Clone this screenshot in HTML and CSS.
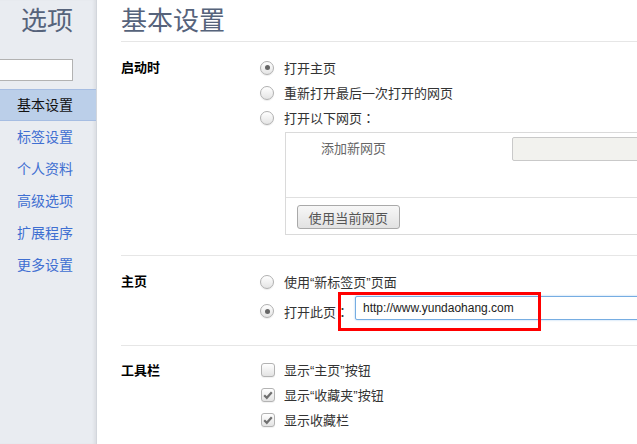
FILE: index.html
```html
<!DOCTYPE html>
<html lang="zh-CN">
<head>
<meta charset="utf-8">
<title>选项 - 基本设置</title>
<link rel="stylesheet" href="styles.css">
</head>
<body>
<div class="page">
  <aside class="sidebar">
    <h1 class="side-title">选项</h1>
    <div class="search-wrap"><input class="search" type="text"></div>
    <nav class="nav">
      <a class="nav-item active">基本设置</a>
      <a class="nav-item">标签设置</a>
      <a class="nav-item">个人资料</a>
      <a class="nav-item">高级选项</a>
      <a class="nav-item">扩展程序</a>
      <a class="nav-item">更多设置</a>
    </nav>
  </aside>
  <main class="main">
    <header class="header"><h2 class="main-title">基本设置</h2></header>

    <section class="section s1">
      <div class="label">启动时</div>
      <div class="controls">
        <div class="row"><span class="radio checked"></span><span>打开主页</span></div>
        <div class="row"><span class="radio"></span><span>重新打开最后一次打开的网页</span></div>
        <div class="row"><span class="radio"></span><span>打开以下网页<span class="colon" lang="zh-TW">：</span></span></div>
        <div class="pages-box">
          <div class="pages-list">
            <span class="add-text">添加新网页</span>
            <span class="add-input"></span>
          </div>
          <div class="pages-foot">
            <button class="btn">使用当前网页</button>
          </div>
        </div>
      </div>
    </section>

    <section class="section s2">
      <div class="label">主页</div>
      <div class="controls">
        <div class="row"><span class="radio"></span><span>使用“新标签页”页面</span></div>
        <div class="row row-url">
          <span class="radio checked"></span><span>打开此页<span class="colon" lang="zh-TW">：</span></span>
          <span class="url-input">http://www.yundaohang.com</span>
          <span class="highlight"></span>
        </div>
      </div>
    </section>

    <section class="section s3">
      <div class="label">工具栏</div>
      <div class="controls">
        <div class="row crow"><span class="checkbox"></span><span>显示“主页”按钮</span></div>
        <div class="row crow"><span class="checkbox"><svg viewBox="0 0 14 14" width="14" height="14"><path d="M3.2 7.2 L5.8 9.8 L10.8 4.2" fill="none" stroke="#707070" stroke-width="2.2"/></svg></span><span>显示“收藏夹”按钮</span></div>
        <div class="row crow"><span class="checkbox"><svg viewBox="0 0 14 14" width="14" height="14"><path d="M3.2 7.2 L5.8 9.8 L10.8 4.2" fill="none" stroke="#707070" stroke-width="2.2"/></svg></span><span>显示收藏栏</span></div>
      </div>
    </section>
  </main>
</div>
</body>
</html>
```

FILE: styles.css
```css
html, body {
  margin: 0;
  padding: 0;
  overflow: hidden;
  background: #fff;
}
body {
  font-family: "Liberation Sans", "Noto Sans CJK SC", sans-serif;
  font-size: 13px;
  color: #333;
}
.page {
  display: flex;
  height: 444px;
  width: 637px;
  overflow: hidden;
}

/* Sidebar */
.sidebar {
  width: 96px;
  flex: none;
  background: #e9ecf1;
  border-right: 1px solid #d2d6dc;
  box-shadow: inset -3px 0 3px -1px rgba(0, 0, 0, 0.06);
  overflow: hidden;
  text-align: right;
}
.side-title {
  margin: 6px 23px 0 0;
  font-size: 26px;
  font-weight: normal;
  line-height: 30px;
  color: #56637b;
}
.search-wrap {
  margin-top: 23px;
  padding-right: 23px;
  display: flex;
  justify-content: flex-end;
}
.search {
  width: 90px;
  height: 22px;
  box-sizing: border-box;
  border: 1px solid #b2b2b2;
  background: #fff;
  padding: 0;
  margin: 0 0 0 -20px;
  flex: none;
}
.nav {
  margin-top: 8px;
  display: flex;
  flex-direction: column;
}
.nav-item {
  display: block;
  height: 32px;
  line-height: 32px;
  padding-right: 23px;
  font-size: 14px;
  color: #3f6fd1;
  box-sizing: border-box;
}
.nav-item.active {
  background: #bbcfe9;
  border-top: 1px solid #a6bde2;
  border-bottom: 1px solid #a6bde2;
  line-height: 30px;
  color: #111;
}

/* Main */
.main {
  flex: 1;
  padding-left: 24px;
  min-width: 0;
}
.header {
  box-sizing: border-box;
  height: 42px;
  padding-top: 6px;
  border-bottom: 1px solid #e6e6e6;
}
.main-title {
  margin: 0;
  font-size: 26px;
  font-weight: normal;
  line-height: 30px;
  color: #56637b;
}
.section {
  display: flex;
  border-bottom: 1px solid #e6e6e6;
}
.s1 { padding: 13px 0 20px; }
.s2 { padding: 13px 0 17px; }
.s3 { padding: 11px 0 0; border-bottom: none; }

.label {
  width: 139px;
  flex: none;
  font-weight: bold;
  color: #000;
  line-height: 26px;
}
.s3 .label { line-height: 27px; }
.controls {
  width: 440px;
  flex: none;
}
.row {
  display: flex;
  align-items: center;
  height: 25px;
  gap: 10px;
  white-space: nowrap;
}
.crow {
  height: 25px;
  gap: 9px;
}
.colon {
  font-family: "Noto Sans CJK TC", "Noto Sans CJK SC", sans-serif;
}
.radio {
  width: 14px;
  height: 14px;
  box-sizing: border-box;
  border-radius: 50%;
  border: 1px solid #b0b0b0;
  background: linear-gradient(#ffffff, #e4e4e4);
  box-shadow: 0 1px 1px rgba(0, 0, 0, 0.08);
  flex: none;
  display: flex;
  align-items: center;
  justify-content: center;
}
.radio.checked::after {
  content: "";
  width: 5px;
  height: 5px;
  border-radius: 50%;
  background: #666;
}
.checkbox {
  width: 14px;
  height: 14px;
  box-sizing: border-box;
  margin-left: 1px;
  border-radius: 3px;
  border: 1px solid #b3b3b3;
  background: linear-gradient(#ffffff, #e3e3e3);
  box-shadow: 0 1px 1px rgba(0, 0, 0, 0.06);
  flex: none;
  display: flex;
  align-items: center;
  justify-content: center;
}
.checkbox svg {
  display: block;
  margin: -1px;
}

/* pages box */
.pages-box {
  margin: 2px 0 0 25px;
  border: 1px solid #dadada;
  width: 420px;
}
.pages-list {
  height: 65px;
  box-sizing: border-box;
  padding: 4px 0 0 35px;
  border-bottom: 1px solid #e0e0e0;
  display: flex;
  align-items: flex-start;
}
.add-text {
  width: 191px;
  flex: none;
  line-height: 24px;
  color: #666;
}
.add-input {
  width: 200px;
  height: 24px;
  box-sizing: border-box;
  border: 1px solid #c9c9c9;
  border-radius: 2px;
  background: #f2f2ee;
}
.pages-foot {
  height: 36px;
  box-sizing: border-box;
  padding: 7px 0 0 11px;
}
.btn {
  width: 103px;
  height: 24px;
  border: 1px solid #a9a9a9;
  border-radius: 3px;
  background: linear-gradient(#f7f7f7, #e2e2e2);
  font-family: "Liberation Sans", "Noto Sans CJK SC", sans-serif;
  font-size: 13px;
  color: #555;
  padding: 0;
  letter-spacing: 0.3px;
}

/* homepage url */
.row-url {
  height: 34px;
  position: relative;
}
.url-input {
  align-self: flex-start;
  margin: 2px 0 0 -4px;
  width: 320px;
  height: 24px;
  line-height: 22px;
  box-sizing: border-box;
  border: 1px solid #76ade2;
  box-shadow: 0 0 2px rgba(90, 160, 230, 0.6);
  border-radius: 2px;
  padding-left: 7px;
  font-family: "Liberation Sans", sans-serif;
  font-size: 12px;
  color: #222;
  background: #fff;
}
.highlight {
  position: absolute;
  left: 78px;
  top: -2px;
  width: 203px;
  height: 39px;
  box-sizing: border-box;
  border: 3px solid #ff0000;
}
```
